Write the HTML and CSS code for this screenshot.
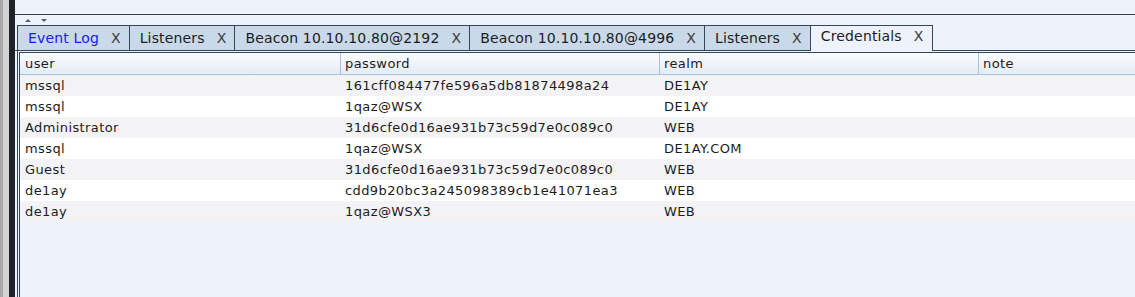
FILE: index.html
```html
<!DOCTYPE html>
<html lang="en">
<head>
    <meta charset="UTF-8">
    <title>Credentials</title>
    <link rel="stylesheet" href="styles.css">
</head>
<body>
    <div class="frame">
        <div class="edge"></div>
        <div class="main">
            <div class="topbar"></div>
            <div class="scroller">
                <span class="tri up"></span>
                <span class="tri down"></span>
            </div>
            <div class="tabs">
                <div class="tab event">Event Log<span class="close">X</span></div>
                <div class="tab">Listeners<span class="close">X</span></div>
                <div class="tab">Beacon 10.10.10.80@2192<span class="close">X</span></div>
                <div class="tab">Beacon 10.10.10.80@4996<span class="close">X</span></div>
                <div class="tab">Listeners<span class="close">X</span></div>
                <div class="tab active">Credentials<span class="close">X</span></div>
            </div>
            <div class="pane">
                <div class="table">
                    <div class="row head">
                        <div class="cell">user</div>
                        <div class="cell">password</div>
                        <div class="cell">realm</div>
                        <div class="cell">note</div>
                    </div>
                    <div class="row">
                        <div class="cell">mssql</div>
                        <div class="cell">161cff084477fe596a5db81874498a24</div>
                        <div class="cell">DE1AY</div>
                        <div class="cell"></div>
                    </div>
                    <div class="row">
                        <div class="cell">mssql</div>
                        <div class="cell">1qaz@WSX</div>
                        <div class="cell">DE1AY</div>
                        <div class="cell"></div>
                    </div>
                    <div class="row">
                        <div class="cell">Administrator</div>
                        <div class="cell">31d6cfe0d16ae931b73c59d7e0c089c0</div>
                        <div class="cell">WEB</div>
                        <div class="cell"></div>
                    </div>
                    <div class="row">
                        <div class="cell">mssql</div>
                        <div class="cell">1qaz@WSX</div>
                        <div class="cell">DE1AY.COM</div>
                        <div class="cell"></div>
                    </div>
                    <div class="row">
                        <div class="cell">Guest</div>
                        <div class="cell">31d6cfe0d16ae931b73c59d7e0c089c0</div>
                        <div class="cell">WEB</div>
                        <div class="cell"></div>
                    </div>
                    <div class="row">
                        <div class="cell">de1ay</div>
                        <div class="cell">cdd9b20bc3a245098389cb1e41071ea3</div>
                        <div class="cell">WEB</div>
                        <div class="cell"></div>
                    </div>
                    <div class="row">
                        <div class="cell">de1ay</div>
                        <div class="cell">1qaz@WSX3</div>
                        <div class="cell">WEB</div>
                        <div class="cell"></div>
                    </div>
                </div>
            </div>
        </div>
    </div>
</body>
</html>
```

FILE: styles.css
```css
body {
    margin: 0;
    background-color: #eef2fa;
    font-family: "DejaVu Sans", sans-serif;
    color: #1c1c1c;
    overflow: hidden;
}
.frame {
    display: flex;
    height: 297px;
}
.edge {
    width: 6px;
    border-left: 3px solid #a9a9a9;
    border-right: 6px solid #1f2329;
    background-color: #d4d4d4;
}
.main {
    flex: 1;
    display: flex;
    flex-direction: column;
    min-width: 0;
}
.topbar {
    height: 14px;
    border-bottom: 1px solid #3c3f44;
}
.scroller {
    height: 10px;
    display: flex;
    align-items: center;
    gap: 10px;
    padding-left: 10px;
}
.tri {
    width: 0;
    height: 0;
    border-left: 3px solid transparent;
    border-right: 3px solid transparent;
}
.tri.up {
    border-bottom: 3px solid #5a5f66;
}
.tri.down {
    border-top: 3px solid #5a5f66;
}
.tabs {
    display: flex;
    align-items: flex-end;
    height: 25px;
    padding-left: 2px;
    border-bottom: 1px solid #33465a;
}
.tab {
    height: 24px;
    display: flex;
    align-items: center;
    padding: 0 8px 0 10px;
    background-color: #c9d9ea;
    border-left: 1px solid #33465a;
    border-top: 1px solid #33465a;
    font-size: 14px;
    letter-spacing: 0.15px;
    color: #1c1c1c;
    white-space: pre;
}
.tab:last-child {
    border-right: 1px solid #33465a;
}
.tab.event {
    color: #1a1aee;
}
.tab.active {
    height: 26px;
    margin-bottom: -1px;
    align-items: flex-start;
    padding-top: 2px;
    box-sizing: border-box;
    background-color: #eef2fa;
    border-right: 1px solid #33465a;
}
.tab.active + .tab {
    border-left: none;
}
.close {
    margin-left: 12px;
    color: #3a3a3a;
    font-size: 14px;
}
.pane {
    flex: 1;
    margin-left: 2px;
    padding: 1px 0 0 1px;
    border-left: 1px solid #33465a;
    display: flex;
}
.table {
    flex: 1;
    border-left: 1px solid #33465a;
    border-top: 1px solid #33465a;
    background-color: #eef2fa;
    font-size: 13px;
    letter-spacing: 0.4px;
}
.row {
    display: grid;
    grid-template-columns: 320px 319px 319px 1fr;
    height: 21px;
    align-items: center;
    background-color: #ffffff;
}
.row:nth-child(even) {
    background-color: #f3f3f6;
}
.cell {
    padding-left: 5px;
    white-space: nowrap;
    overflow: hidden;
    height: 21px;
    line-height: 21px;
}
.row.head {
    background: linear-gradient(#fbfcfe, #e4ebf5);
    border-bottom: 1px solid #a8c0dc;
    color: #1c1c1c;
}
.row.head .cell + .cell {
    border-left: 1px solid #a8c0dc;
    padding-left: 4px;
}
```
